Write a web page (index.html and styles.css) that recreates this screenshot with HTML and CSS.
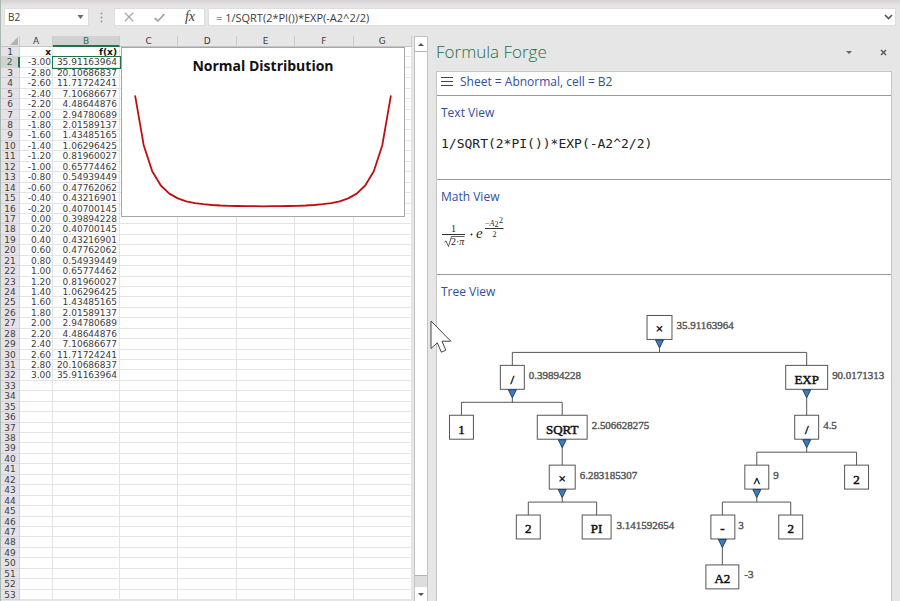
FILE: index.html
```html
<!DOCTYPE html>
<html lang="en">
<head>
<meta charset="utf-8">
<title>Formula Forge</title>
<link rel="stylesheet" href="styles.css">
</head>
<body>
<div class="app">
  <header class="formula-bar">
    <div class="name-box">
      <input class="name-input" type="text" value="B2" aria-label="Name box">
      <button class="icon-button" type="button" aria-label="Choose name"><svg width="7" height="4" viewBox="0 0 7 4"><path d="M0.5 0h6L3.5 4z" fill="#666"/></svg></button>
    </div>
    <svg class="grip" width="3" height="11" viewBox="0 0 3 11" fill="#999"><circle cx="1.5" cy="1.5" r="1"/><circle cx="1.5" cy="5.5" r="1"/><circle cx="1.5" cy="9.5" r="1"/></svg>
    <div class="edit-tools">
      <button class="icon-button" type="button" aria-label="Cancel"><svg width="10" height="10" viewBox="0 0 10 10"><path d="M0.8 0.8l8.4 8.4M9.2 0.8l-8.4 8.4" stroke="#a8a8a8" stroke-width="1.3" fill="none"/></svg></button>
      <button class="icon-button" type="button" aria-label="Enter"><svg width="11" height="9" viewBox="0 0 11 9"><path d="M0.6 5l3.2 3L10.4 1" stroke="#a8a8a8" stroke-width="1.8" fill="none"/></svg></button>
      <button class="icon-button fx" type="button">fx</button>
    </div>
    <div class="formula-box">
      <input class="formula-input" type="text" value="= 1/SQRT(2*PI())*EXP(-A2^2/2)" aria-label="Formula">
      <button class="icon-button" type="button" aria-label="Expand formula bar"><svg width="9" height="6" viewBox="0 0 9 6"><path d="M1 1l3.5 3.5L8 1" stroke="#555" stroke-width="1.7" fill="none"/></svg></button>
    </div>
  </header>

  <main class="workspace">
    <section class="sheet">
      <table class="cells">
        <thead>
          <tr><th class="corner"><svg width="8" height="8" viewBox="0 0 8 8"><path d="M8 0v8H0z" fill="#b2b2b2"/></svg></th><th>A</th><th class="active-col">B</th><th>C</th><th>D</th><th>E</th><th>F</th><th>G</th></tr>
        </thead>
        <tbody id="rows"></tbody>
      </table>
      <figure class="chart">
        <figcaption class="chart-title">Normal Distribution</figcaption>
        <svg class="chart-plot" viewBox="0 0 282 140" role="img" aria-label="Curve of f(x)"><polyline id="curve" fill="none" stroke="#c00d12" stroke-width="1.8" stroke-linejoin="round" stroke-linecap="round"/></svg>
      </figure>
    </section>

    <div class="scrollbar">
      <button class="scroll-button" type="button" aria-label="Scroll up"><svg width="6" height="3" viewBox="0 0 6 3"><path d="M0 3h6L3 0z" fill="#555"/></svg></button>
      <div class="thumb"></div>
      <button class="scroll-button" type="button" aria-label="Scroll down"><svg width="6" height="3" viewBox="0 0 6 3"><path d="M0 0h6L3 3z" fill="#555"/></svg></button>
    </div>

    <aside class="pane">
      <div class="pane-head">
        <h1 class="pane-title">Formula Forge</h1>
        <button class="icon-button" type="button" aria-label="Pane options"><svg width="6" height="3" viewBox="0 0 6 3"><path d="M0 0h6L3 3z" fill="#666"/></svg></button>
        <button class="icon-button" type="button" aria-label="Close pane"><svg width="7" height="7" viewBox="0 0 7 7"><path d="M1 1l5 5M6 1L1 6" stroke="#555" stroke-width="1.4" fill="none"/></svg></button>
      </div>
      <div class="pane-body">
        <div class="context">
          <button class="icon-button" type="button" aria-label="Menu"><svg width="12" height="9" viewBox="0 0 12 9" shape-rendering="crispEdges"><path d="M0 0.5h12M0 4.5h12M0 8.5h12" stroke="#444" stroke-width="1"/></svg></button>
          <span>Sheet = Abnormal, cell = B2</span>
        </div>
        <section class="view">
          <h2 class="view-title">Text View</h2>
          <code class="formula-text">1/SQRT(2*PI())*EXP(-A2^2/2)</code>
        </section>
        <section class="view view-math">
          <h2 class="view-title">Math View</h2>
          <svg class="math" width="64" height="34" viewBox="0 0 64 34">
            <path d="M1 18.500h23M44 12.500h18.500" stroke="#333" stroke-width="1"/>
            <path d="M3.500 26l1.500-1 2.500 5.500L10.500 20.500h13" stroke="#333" stroke-width="0.800" fill="none"/>
            <text class="m-small" x="12.500" y="16" text-anchor="middle">1</text>
            <text class="m-small" x="10" y="29">2·<tspan class="m-italic">π</tspan></text>
            <circle cx="30.500" cy="18.500" r="1" fill="#222"/>
            <text class="m-base" x="35" y="22">e</text>
            <text class="m-tiny" x="44" y="10">−<tspan class="m-italic">A</tspan></text>
            <text class="m-tiny" x="53.500" y="11">2</text>
            <text class="m-tiny" x="58" y="7">2</text>
            <text class="m-tiny" x="53.500" y="20.500" text-anchor="middle">2</text>
          </svg>
        </section>
        <section class="view view-tree">
          <h2 class="view-title">Tree View</h2>
          <svg class="tree" viewBox="0 0 455 290" role="img" aria-label="Formula tree">
            <g class="links">
              <path d="M223 35v12.500M75.500 61V47.500h295V61"/>
              <path d="M75.500 85v12.500M24.500 111V97.500h101V111"/>
              <path d="M370.500 85v26M125.500 135v26M286 235v26"/>
              <path d="M370.500 135v12.500M320.500 161v-13.500h100v13.500"/>
              <path d="M125.500 185v12.500M91.500 211v-13.500h68.500v13.500"/>
              <path d="M320.500 185v12.500M286 211v-13.500h68.500v13.500"/>
            </g>
            <g class="boxes">
              <rect x="210.500" y="10.500" width="25" height="24"/>
              <rect x="63.500" y="60.500" width="24" height="24"/>
              <rect x="349.500" y="60.500" width="42" height="24"/>
              <rect x="12.500" y="110.500" width="24" height="24"/>
              <rect x="100.500" y="110.500" width="50" height="24"/>
              <rect x="358.500" y="110.500" width="24" height="24"/>
              <rect x="112.500" y="160.500" width="26" height="24"/>
              <rect x="308.500" y="160.500" width="24" height="24"/>
              <rect x="408.500" y="160.500" width="24" height="24"/>
              <rect x="79.500" y="210.500" width="24" height="24"/>
              <rect x="145.500" y="210.500" width="29" height="24"/>
              <rect x="274.500" y="210.500" width="24" height="24"/>
              <rect x="342.500" y="210.500" width="24" height="24"/>
              <rect x="269.500" y="260.500" width="33" height="24"/>
            </g>
            <g class="arrows">
              <path d="M219 35h8l-4 8z"/><path d="M71.500 85h8l-4 8z"/><path d="M366.500 85h8l-4 8z"/>
              <path d="M121.500 135h8l-4 8z"/><path d="M366.500 135h8l-4 8z"/><path d="M121.500 185h8l-4 8z"/>
              <path d="M316.500 185h8l-4 8z"/><path d="M282 235h8l-4 8z"/>
            </g>
            <g class="names">
              <text x="223" y="28">×</text><text x="75.500" y="79">/</text><text x="370.500" y="79">EXP</text>
              <text x="24.500" y="129">1</text><text x="125.500" y="129">SQRT</text><text x="370.500" y="129">/</text>
              <text x="125.500" y="178">×</text><text x="320.500" y="181">^</text><text x="420.500" y="179">2</text>
              <text x="91.500" y="229">2</text><text x="160" y="229">PI</text><text x="286" y="229">-</text>
              <text x="354.500" y="229">2</text><text x="286" y="279">A2</text>
            </g>
            <g class="values">
              <text x="240" y="24">35.91163964</text><text x="92" y="74">0.39894228</text><text x="396" y="74">90.0171313</text>
              <text x="155" y="124">2.506628275</text><text x="387" y="124">4.5</text><text x="143" y="174">6.283185307</text>
              <text x="337" y="174">9</text><text x="180" y="224">3.141592654</text><text x="302" y="224">3</text><text x="308" y="274">-3</text>
            </g>
          </svg>
        </section>
      </div>
    </aside>
  </main>
  <svg class="pointer" width="22" height="34" viewBox="0 0 22 34"><path d="M1 1v27.500l6.300-5.700 4 9.400 4.500-2-3.800-9h8.800z" fill="#fff" stroke="#444" stroke-width="1"/></svg>
</div>
<script src="script.js"></script>
</body>
</html>
```
FILE: styles.css
```css
* { box-sizing: border-box; }

body {
  margin: 0;
  background: #e6e6e6;
  color: #3c3c3c;
  font-family: "Open Sans", "Noto Sans", sans-serif;
}

button, input {
  margin: 0;
  padding: 0;
  border: 0;
  background: none;
  color: inherit;
  font: inherit;
}

.app {
  position: relative;
  display: grid;
  grid-template-rows: 36px minmax(0, 1fr);
  height: 100vh;
  overflow: hidden;
  border-left: 1px solid #a9b8b0;
}

.icon-button {
  display: flex;
  align-items: center;
  justify-content: center;
}

/* Formula bar */
.formula-bar {
  display: flex;
  align-items: flex-start;
  padding: 8px 4px 0 3px;
  background: linear-gradient(#d5d0d4, #e6e6e6 6px);
  font-size: 11px;
}

.name-box, .edit-tools, .formula-box {
  display: flex;
  align-items: center;
  height: 18px;
  background: #fff;
  border: 1px solid #dedede;
}

.name-box { width: 85px; padding: 0 4px 0 3px; font-size: 10px; }
.name-input { flex: 1; min-width: 0; }
.grip { margin: 4px 11px 0; }
.edit-tools { width: 91px; padding: 0 9px; justify-content: space-between; }
.fx { font: italic 14px "Liberation Serif", serif; }
.formula-box { flex: 1; margin-left: 3px; padding: 0 2px 0 7px; }
.formula-input { flex: 1; min-width: 0; }

/* Spreadsheet */
.workspace {
  display: grid;
  grid-template-columns: minmax(0, 413fr) 14px minmax(0, 472fr);
  min-height: 0;
}

.sheet { position: relative; min-height: 0; padding: 0 2px 1px 0; }

.cells {
  display: grid;
  grid-template-columns: 19px 33px 67px repeat(5, minmax(0, 1fr));
  grid-template-rows: 11px repeat(53, minmax(0, 1fr));
  height: 100%;
  font-family: "DejaVu Sans", sans-serif;
  font-size: 9px;
  line-height: 10px;
}

.cells thead, .cells tbody, .cells tr { display: contents; }

.cells th, .cells td {
  padding: 0 1px 0 0;
  border-right: 1px solid #e4e4e4;
  border-bottom: 1px solid #e4e4e4;
  background: #fff;
  text-align: right;
  white-space: nowrap;
}

.cells td:nth-child(3) { padding-right: 2px; }

.cells thead th {
  padding: 0;
  border-right-color: #ccc;
  border-bottom-color: #c4c4c4;
  background: #e6e6e6;
  font-weight: normal;
  text-align: center;
}

.cells th.corner { text-align: right; }
.corner svg { display: block; margin: 1px 1px 0 auto; }
.cells thead th.active-col { background: #d2d2d2; color: #217346; border-bottom: 2px solid #217346; }

.cells tbody th {
  padding: 0;
  border-color: #d4d0d5;
  background: #e6e3e8;
  font-weight: normal;
  text-align: center;
}

.cells tbody th.active-row { background: #d2d2d2; color: #217346; border-right: 2px solid #217346; }
.cells td.label { color: #111; font-weight: bold; }
.cells td.selected { outline: 1px solid #217346; z-index: 1; }

.chart {
  position: absolute;
  top: 11px;
  left: 120px;
  right: 9px;
  margin: 0;
  border: 1px solid #a6a6a6;
  background: #fff;
}

.chart-title {
  padding-top: 8px;
  color: #111;
  font-size: 14px;
  font-weight: bold;
  line-height: 20px;
  text-align: center;
}

.chart-plot { display: block; width: 100%; }

.scrollbar {
  display: grid;
  grid-template-rows: 14px minmax(0, 1fr) 14px;
  border: 1px solid #c2c2c2;
  border-bottom: 0;
  background: #ddd;
}

.scroll-button {
  display: flex;
  align-items: center;
  justify-content: center;
  background: #fff;
}

.thumb { margin-bottom: 11px; background: #fff; border: solid #b5b5b5; border-width: 1px 0; }

/* Task pane */
.pane {
  display: grid;
  grid-template-rows: 35px minmax(0, 1fr);
  padding: 0 8px;
  min-height: 0;
}

.pane-head {
  display: flex;
  align-items: center;
  gap: 28px;
  padding: 0 5px 3px 0;
}

.pane-title {
  flex: 1;
  margin: 0;
  color: #2b6b46;
  font-size: 17px;
  font-weight: 300;
  line-height: 24px;
}

.pane-body {
  background: #fff;
  border: 1px solid #c6c6c6;
  border-bottom: 0;
  overflow: hidden;
}

.context {
  display: flex;
  align-items: center;
  gap: 7px;
  height: 24px;
  padding: 0 4px 4px;
  border-bottom: 1px solid #9a9a9a;
  color: #2f4f9f;
  font-size: 12px;
}

.view {
  height: 84px;
  padding: 8px 4px 0;
  border-bottom: 1px solid #9a9a9a;
}

.view-math { height: 95px; }

.view-title {
  margin: 0;
  color: #2f4f9f;
  font-size: 12px;
  font-weight: normal;
  line-height: 18px;
}

.formula-text {
  display: block;
  margin-top: 13px;
  color: #222;
  font-family: "DejaVu Sans Mono", monospace;
  font-size: 13px;
  line-height: 18px;
}

.math { display: block; margin-top: 10px; font-family: "Liberation Serif", serif; fill: #222; }
.m-small { font-size: 10px; }
.m-base { font-size: 15px; font-style: italic; }
.m-tiny { font-size: 8px; }
.m-italic { font-style: italic; }

.view-tree { height: auto; padding: 8px 0 0; border: 0; }
.view-tree .view-title { padding-left: 4px; }
.tree { display: block; width: 100%; margin-top: 4px; font-family: "Liberation Serif", serif; }
.links { fill: none; stroke: #555; }
.boxes { fill: #fff; stroke: #555; }
.arrows { fill: #3d7cc0; stroke: #24425f; }
.names { fill: #111; stroke: #111; stroke-width: 0.5; font-size: 13px; text-anchor: middle; }
.values { fill: #555; stroke: #555; stroke-width: 0.4; font-size: 11px; }

.pointer { position: absolute; left: 429px; top: 320px; }
```
FILE: script.js
```js
const f = x => Math.exp(x * x / 2) / Math.sqrt(2 * Math.PI);
const xs = Array.from({ length: 31 }, (_, i) => (i - 15) / 5);

// Worksheet rows: heading, 31 samples, then blanks.
const rows = document.getElementById("rows");
for (let n = 1; n <= 53; n++) {
  const tr = document.createElement("tr");
  const head = document.createElement("th");
  head.textContent = n;
  if (n === 2) head.className = "active-row";
  tr.append(head);
  const x = xs[n - 2];
  for (let c = 0; c < 7; c++) {
    const td = document.createElement("td");
    if (n === 1 && c < 2) {
      td.textContent = ["x", "f(x)"][c];
      td.className = "label";
    } else if (x !== undefined && c < 2) {
      td.textContent = c ? f(x).toFixed(8) : x.toFixed(2);
    }
    if (n === 2 && c === 1) td.className = "selected";
    tr.append(td);
  }
  rows.append(tr);
}

// Chart line in plot coordinates.
document.getElementById("curve").setAttribute("points",
  xs.map(x => `${(141 + x * 42.6).toFixed(1)},${(131.5 - f(x) * 3.1).toFixed(1)}`).join(" "));
```
